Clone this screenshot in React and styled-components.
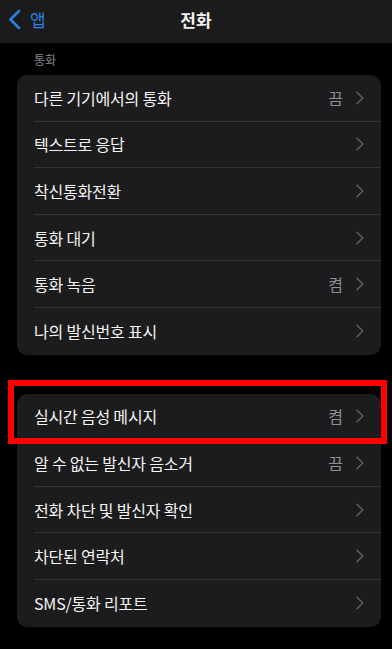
import React from "react";
import styled, { createGlobalStyle } from "styled-components";

const GlobalStyle = createGlobalStyle`
  html, body {
    margin: 0;
    padding: 0;
    background: #000;
  }
  body {
    font-family: "Noto Sans CJK KR", "Noto Sans", sans-serif;
    -webkit-font-smoothing: antialiased;
  }
`;

const callItems = [
  { label: "다른 기기에서의 통화", value: "끔" },
  { label: "텍스트로 응답" },
  { label: "착신통화전환" },
  { label: "통화 대기" },
  { label: "통화 녹음", value: "켬" },
  { label: "나의 발신번호 표시" },
];

const moreItems = [
  { label: "실시간 음성 메시지", value: "켬" },
  { label: "알 수 없는 발신자 음소거", value: "끔" },
  { label: "전화 차단 및 발신자 확인" },
  { label: "차단된 연락처" },
  { label: "SMS/통화 리포트" },
];

const Chevron = () => (
  <svg width="8" height="14" viewBox="0 0 8 14" fill="none">
    <path d="M1 1.2L6.8 7L1 12.8" stroke="#5c5c60" strokeWidth="1.6" strokeLinecap="round" strokeLinejoin="round" />
  </svg>
);

const BackChevron = () => (
  <svg width="13" height="21" viewBox="0 0 13 21" fill="none">
    <path d="M11 2L2.5 10.5L11 19" stroke="#2f7fe0" strokeWidth="2.6" strokeLinecap="round" strokeLinejoin="round" />
  </svg>
);

const SettingsGroup = ({ items }) => (
  <Card>
    {items.map((item) => (
      <Row key={item.label}>
        <Label>{item.label}</Label>
        {item.value && <Value>{item.value}</Value>}
        <Chevron />
      </Row>
    ))}
  </Card>
);

const App = () => {
  return (
    <Page>
      <GlobalStyle />
      <NavBar>
        <BackButton>
          <BackChevron />
          <BackText>앱</BackText>
        </BackButton>
        <Title>전화</Title>
      </NavBar>
      <Content>
        <SectionHeader>통화</SectionHeader>
        <SettingsGroup items={callItems} />
        <Highlighted>
          <SettingsGroup items={moreItems} />
          <RedBox />
        </Highlighted>
      </Content>
    </Page>
  );
};

const Page = styled.div`
  width: 392px;
  height: 649px;
  background: #000;
  overflow: hidden;
`;

const NavBar = styled.div`
  position: relative;
  height: 43px;
  background: #1b1b1b;
  display: flex;
  align-items: center;
  justify-content: center;
`;

const BackButton = styled.div`
  position: absolute;
  left: 8px;
  top: 9px;
  display: flex;
  align-items: center;
  gap: 9px;
`;

const BackText = styled.span`
  color: #2f7fe0;
  font-size: 17px;
  line-height: 20px;
`;

const Title = styled.div`
  color: #f2f2f2;
  font-size: 17px;
  font-weight: 700;
  line-height: 20px;
  margin-top: -4px;
`;

const Content = styled.div`
  padding: 8px 11px 0 17px;
`;

const SectionHeader = styled.div`
  color: #8a8a8e;
  font-size: 12px;
  line-height: 16px;
  padding: 1px 0 0 17px;
  height: 23px;
`;

const Card = styled.div`
  background: #1c1c1e;
  border-radius: 10px;
  overflow: hidden;
`;

const Row = styled.div`
  display: flex;
  align-items: center;
  height: 46.6px;
  margin-left: 17px;
  padding-right: 17px;
  box-sizing: border-box;
  border-bottom: 0.5px solid #343436;
  &:last-child {
    border-bottom: none;
  }
`;

const Label = styled.span`
  flex: 1;
  color: #f4f4f4;
  font-size: 16px;
  line-height: 20px;
  letter-spacing: -0.2px;
`;

const Value = styled.span`
  color: #8e8e92;
  font-size: 16px;
  line-height: 20px;
  margin-right: 13px;
`;

const Highlighted = styled.div`
  position: relative;
  margin-top: 39px;
`;

const RedBox = styled.div`
  position: absolute;
  left: -9px;
  top: -14px;
  width: 379px;
  height: 64px;
  box-sizing: border-box;
  border: 6px solid #ff0000;
  pointer-events: none;
`;

export default App;
